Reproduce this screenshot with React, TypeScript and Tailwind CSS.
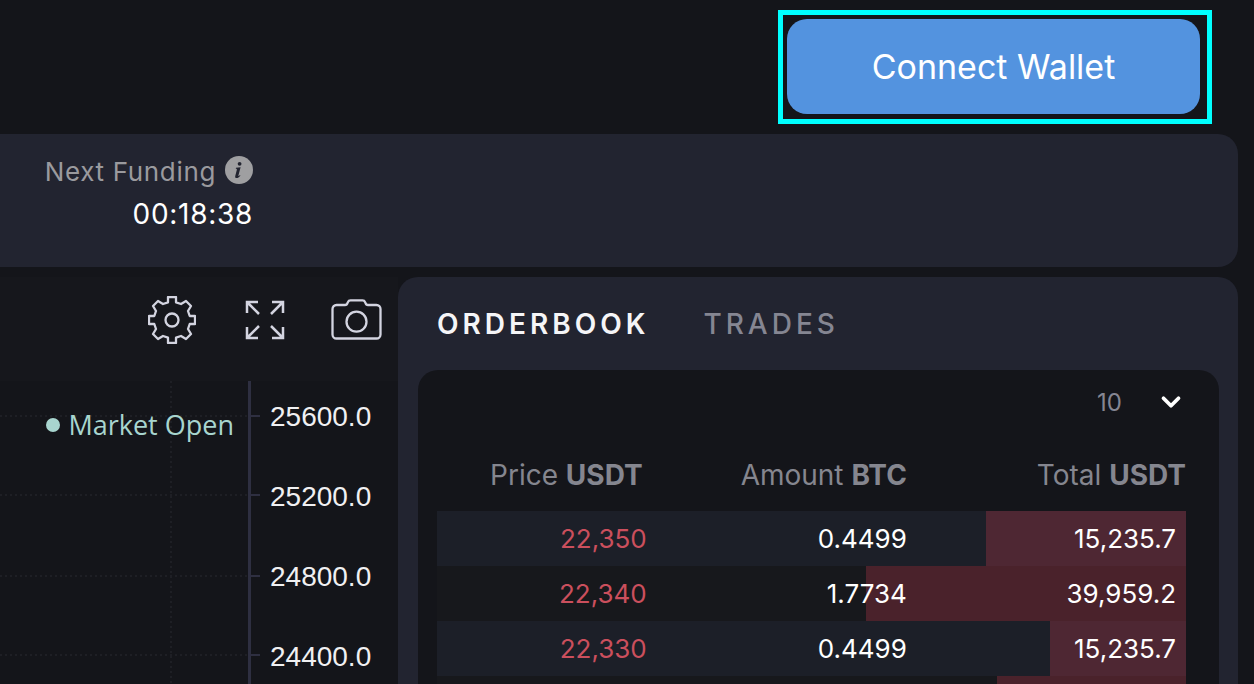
import { ChevronDown } from 'lucide-react';

type Order = {
  price: string;
  amount: string;
  total: string;
  depth: number;
};

const ASKS: Order[] = [
  { price: '22,350', amount: '0.4499', total: '15,235.7', depth: 26.7 },
  { price: '22,340', amount: '1.7734', total: '39,959.2', depth: 42.7 },
  { price: '22,330', amount: '0.4499', total: '15,235.7', depth: 18.1 },
  { price: '', amount: '', total: '', depth: 25.2 },
];

const PRICE_LABELS = ['25600.0', '25200.0', '24800.0', '24400.0'];

// y of each price gridline inside the chart
const GRID_LINES = [35, 114, 195, 274];

export default function App() {
  return (
    <div className="flex h-screen flex-col overflow-hidden bg-[#14151a] font-['Inter',sans-serif] text-white">
      <Header />
      <FundingBar />
      <main className="mt-[10px] flex min-h-0 flex-1 pr-4">
        <Chart />
        <OrderPanel />
      </main>
    </div>
  );
}

function Header() {
  return (
    <header className="flex justify-end pt-[10px] pr-[42px] pb-[10px]">
      <div className="border-5 border-[#00ffff] pt-1 pr-[7px] pb-[5px] pl-1">
        <button
          type="button"
          className="h-[95px] w-[413px] rounded-[20px] bg-[#5393df] text-[34px] leading-10"
        >
          Connect Wallet
        </button>
      </div>
    </header>
  );
}

function FundingBar() {
  return (
    <section className="mr-4 flex h-[133px] rounded-r-[20px] bg-[#222430] pt-5">
      <div className="flex w-[253px] flex-col items-end">
        <div className="flex items-start gap-[9px]">
          <span className="text-[26px] leading-9 tracking-wide text-[#9a9a9e]">Next Funding</span>
          <InfoIcon />
        </div>
        <span className="mt-1 text-[28px] leading-10 tracking-wide">00:18:38</span>
      </div>
    </section>
  );
}

function Chart() {
  return (
    <section className="flex w-[398px] shrink-0 flex-col">
      <div className="flex h-[104px] items-center justify-end bg-[#16171c] pr-4 pb-[18px] text-[#d3d4e0]">
        <button type="button" aria-label="Settings" className="mr-[49px]">
          <GearIcon />
        </button>
        <button type="button" aria-label="Fullscreen" className="mr-[46px]">
          <ExpandIcon />
        </button>
        <button type="button" aria-label="Take a snapshot">
          <CameraIcon />
        </button>
      </div>

      <div className="flex min-h-0 flex-1">
        <div className="relative w-[262px] shrink-0">
          <svg className="absolute inset-0 h-full w-full" aria-hidden="true">
            <line x1="171" y1="0" x2="171" y2="100%" stroke="#1e1f25" strokeWidth="2" strokeDasharray="2 3" />
            {GRID_LINES.map((y) => (
              <g key={y}>
                <line x1="0" y1={y} x2="248" y2={y} stroke="#1e1f25" strokeWidth="2" strokeDasharray="2 3" />
                <line x1="250" y1={y} x2="260" y2={y} stroke="#2e2f41" strokeWidth="2" />
              </g>
            ))}
            <line x1="249.5" y1="0" x2="249.5" y2="100%" stroke="#2e2f41" strokeWidth="3" />
          </svg>
          <div className="relative flex items-center justify-end gap-2 pt-[26px] pr-7 text-[#a8d5cf]">
            <span className="size-[14px] rounded-full bg-[#a8d5cf]" />
            <span className="font-['Open_Sans',sans-serif] text-[27px] leading-9">Market Open</span>
          </div>
        </div>
        <ul className="flex flex-col gap-12 pt-5 pl-2 font-['Liberation_Sans',sans-serif] text-[28px] leading-8 text-[#f0f0f2]">
          {PRICE_LABELS.map((label) => (
            <li key={label}>{label}</li>
          ))}
        </ul>
      </div>
    </section>
  );
}

function OrderPanel() {
  return (
    <section className="flex min-w-0 flex-1 flex-col rounded-t-[20px] bg-[#222430] pr-[19px] pl-5">
      <nav className="flex h-[93px] shrink-0 items-center gap-[54px] pl-[19px] text-[28px] leading-9 tracking-[4px]">
        <button type="button" className="font-semibold text-[#f5f5f7]">
          ORDERBOOK
        </button>
        <button type="button" className="font-medium text-[#858692]">
          TRADES
        </button>
      </nav>

      <div className="min-h-0 flex-1 overflow-hidden rounded-t-[20px] bg-[#14151a] pr-[33px] pl-[19px]">
        <div className="flex h-[66px] items-center justify-end">
          <div className="relative">
            <select
              aria-label="Price grouping"
              defaultValue="10"
              className="block w-[89px] appearance-none bg-transparent text-[24px] leading-8 text-[#858692]"
            >
              <option>10</option>
            </select>
            <ChevronDown className="pointer-events-none absolute top-0 right-0 size-[30px]" strokeWidth={3} />
          </div>
        </div>

        <table className="w-full table-fixed text-right">
          <colgroup>
            <col className="w-[28%]" />
            <col className="w-[35%]" />
            <col className="w-[37%]" />
          </colgroup>
          <thead>
            <tr className="h-[75px] text-[28px] leading-9 text-[#85868f]">
              <th className="pt-0.5 pr-1 font-normal">
                Price <span className="font-bold">USDT</span>
              </th>
              <th className="pt-0.5 pr-0.5 font-normal">
                Amount <span className="font-bold">BTC</span>
              </th>
              <th className="pt-0.5 font-normal">
                Total <span className="font-bold">USDT</span>
              </th>
            </tr>
          </thead>
          <tbody>
            {ASKS.map((order, i) => (
              <OrderRow key={i} order={order} />
            ))}
          </tbody>
        </table>
      </div>
    </section>
  );
}

function OrderRow({ order }: { order: Order }) {
  return (
    <tr className="relative isolate h-[55px] bg-[#17181c] text-[26px] leading-9 odd:bg-[#1c1f28]">
      <td className="text-[#cb4f5d]">
        <span
          className="absolute inset-y-0 right-0 -z-10 bg-[rgb(208,60,83)]/28"
          style={{ width: `${order.depth}%` }}
        />
        {order.price}
      </td>
      <td className="pr-0.5">{order.amount}</td>
      <td className="pr-[10px]">{order.total}</td>
    </tr>
  );
}

function InfoIcon() {
  return (
    <svg className="mt-0.5 size-7" viewBox="0 0 28 28" aria-hidden="true">
      <circle cx="14" cy="14" r="14" fill="#9f9fa1" />
      <circle cx="14.6" cy="7.8" r="1.9" fill="#222430" />
      <path
        d="M11 11.8l4.6-.6-2.2 8.2c-.2.8.4.8 1.6-.4l.4.4c-1.4 1.8-2.6 2.6-3.8 2.6-1.3 0-1.7-.9-1.3-2.3l1.5-5.6c.3-1-.1-1.4-1-1.4z"
        fill="#222430"
      />
    </svg>
  );
}

function GearIcon() {
  return (
    <svg className="size-12" viewBox="0 0 48 48" fill="none" stroke="currentColor" strokeWidth="2.3" strokeLinejoin="round">
      <path d="M20 1h8v5.3L33 8l5-3 5 5-3 5 1.7 5H47v8h-5.3L40 33l3 5-5 5-5-3-5 1.7V47h-8v-5.3L15 40l-5 3-5-5 3-5-1.7-5H1v-8h5.3L8 15l-3-5 5-5 5 3 5-1.7z" />
      <circle cx="24" cy="24" r="6.5" />
    </svg>
  );
}

function ExpandIcon() {
  return (
    <svg className="size-10" viewBox="0 0 40 40" fill="none" stroke="currentColor" strokeWidth="2.5">
      <path d="M2 13V2h11M2 2l12 12M27 2h11v11M38 2L26 14M2 27v11h11M2 38l12-12M27 38h11V27M38 38L26 26" />
    </svg>
  );
}

function CameraIcon() {
  return (
    <svg className="mb-0.5 h-[41px] w-[51px]" viewBox="0 0 51 41" fill="none" stroke="currentColor" strokeWidth="2.3" strokeLinejoin="round">
      <path d="M5.5 6H14q2 0 2.5-2l.5-1q.6-1.6 2.5-1.6h12q1.9 0 2.5 1.6l.5 1q.5 2 2.5 2h8.5a4 4 0 0 1 4 4v25.5a4 4 0 0 1-4 4h-40a4 4 0 0 1-4-4V10a4 4 0 0 1 4-4z" />
      <circle cx="25.5" cy="22.7" r="10" />
    </svg>
  );
}
